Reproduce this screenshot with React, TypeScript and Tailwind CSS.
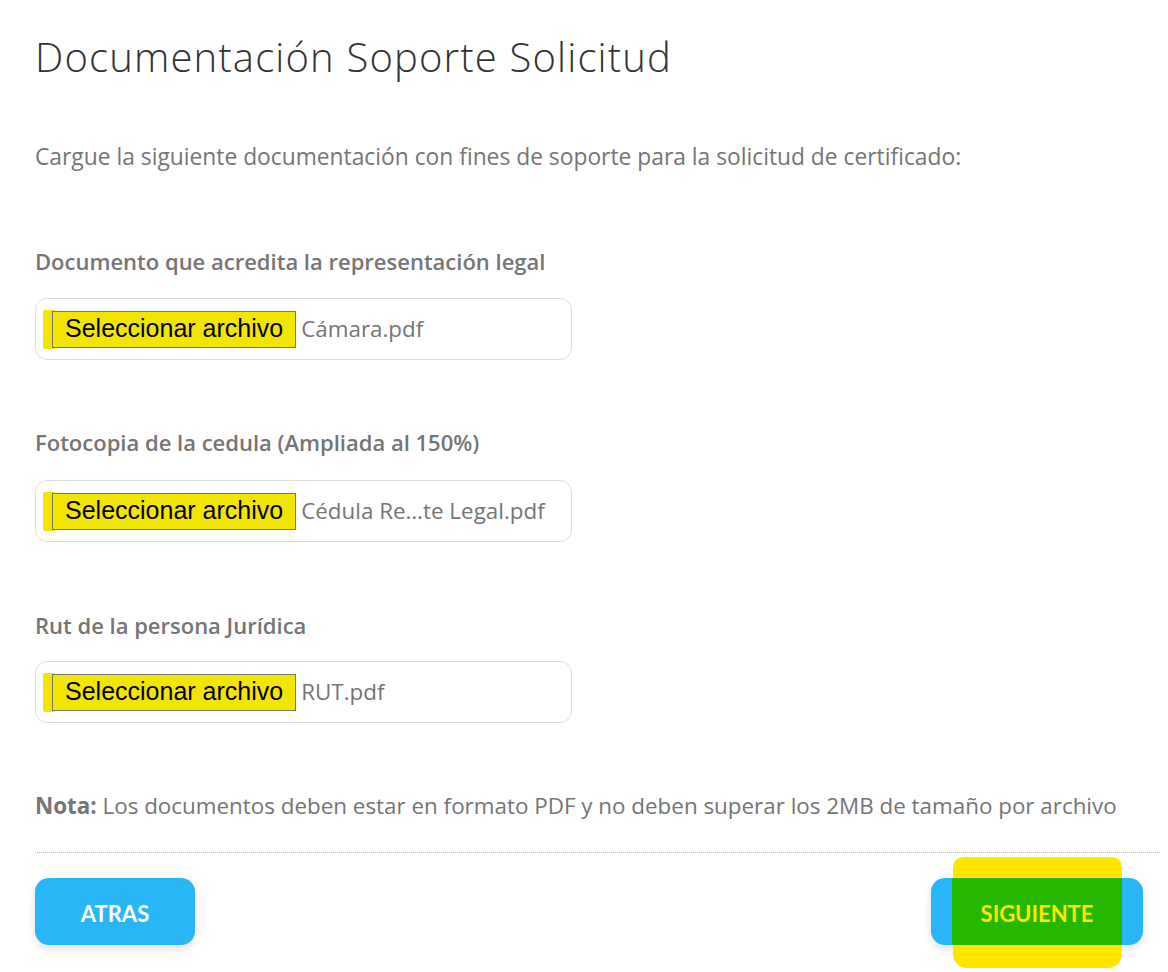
const body = { fontFamily: "'Open Sans', 'Noto Sans', sans-serif" }

type FileFieldProps = {
  label: string
  file: string
  gap: string
}

const FileField = ({ label, file, gap }: FileFieldProps) => {
  return (
    <div className="flex flex-col">
      <div className="text-[22px] leading-[30px] font-semibold text-[#757575]" style={body}>
        {label}
      </div>
      <div className={`${gap} flex h-[62px] w-[537px] items-center rounded-[12px] border border-[#dddddd] bg-white pl-[8px]`}>
        <div className="relative flex h-[39px] items-center">
          <span className="absolute -left-[1px] top-0 h-full w-[12px] rounded-l-[2px] bg-[#f2e600]" />
          <span
            className="relative ml-[8px] flex h-[37px] items-center border border-[#767676] bg-[#f2e600] px-[12px] text-[25px] text-black"
            style={{ fontFamily: "'Liberation Sans', Arial, sans-serif" }}>
            Seleccionar archivo
          </span>
        </div>
        <span className="ml-[5px] text-[22.4px] text-[#757575]" style={body}>
          {file}
        </span>
      </div>
    </div>
  )
}

export default function App() {
  return (
    <div className="min-h-[972px] w-[1168px] bg-white pl-[35px] pr-[8px] pt-[33px]">
      <h1
        className="text-[40px] font-light leading-[48px] tracking-[1.15px] text-[#333333]"
        style={{ fontFamily: "'Open Sans', sans-serif" }}>
        Documentación Soporte Solicitud
      </h1>
      <p className="mt-[61px] text-[22.8px] leading-[30px] text-[#757575]" style={body}>
        Cargue la siguiente documentación con fines de soporte para la solicitud de certificado:
      </p>
      <div className="mt-[74px]">
        <FileField label="Documento que acredita la representación legal" file="Cámara.pdf" gap="mt-[22px]" />
      </div>
      <div className="mt-[67px]">
        <FileField label="Fotocopia de la cedula (Ampliada al 150%)" file="Cédula Re…te Legal.pdf" gap="mt-[23px]" />
      </div>
      <div className="mt-[68px]">
        <FileField label="Rut de la persona Jurídica" file="RUT.pdf" gap="mt-[21px]" />
      </div>
      <p className="mt-[68px] text-[22.4px] leading-[30px] text-[#757575]" style={body}>
        <span className="font-bold">Nota:</span> Los documentos deben estar en formato PDF y no deben superar los 2MB de tamaño por archivo
      </p>
      <div className="mt-[31px] border-t border-dotted border-[#bbbbbb]" />
      <div className="mt-[25px] flex items-center justify-between pr-[17px]">
        <button
          className="flex h-[67px] w-[160px] items-center justify-center rounded-[14px] bg-[#29b6f6] pt-[3px] text-[22px] font-bold text-white shadow-[0_4px_10px_rgba(0,0,0,0.12)]"
          style={{ fontFamily: "Lato, sans-serif" }}>
          ATRAS
        </button>
        <button
          className="relative flex h-[67px] w-[212px] items-center justify-center rounded-[14px] bg-[#29b6f6] pt-[3px] text-[22px] font-bold shadow-[0_4px_10px_rgba(0,0,0,0.12)]"
          style={{ fontFamily: "Lato, sans-serif" }}>
          <span className="absolute -bottom-[23px] left-[22px] right-[21px] -top-[21px] rounded-t-[10px] rounded-b-[14px] bg-[#ffe600]" />
          <span className="absolute bottom-0 left-[21px] right-[21px] top-0 bg-[#26b800]" />
          <span className="relative text-[#ffe600]">SIGUIENTE</span>
        </button>
      </div>
    </div>
  )
}
